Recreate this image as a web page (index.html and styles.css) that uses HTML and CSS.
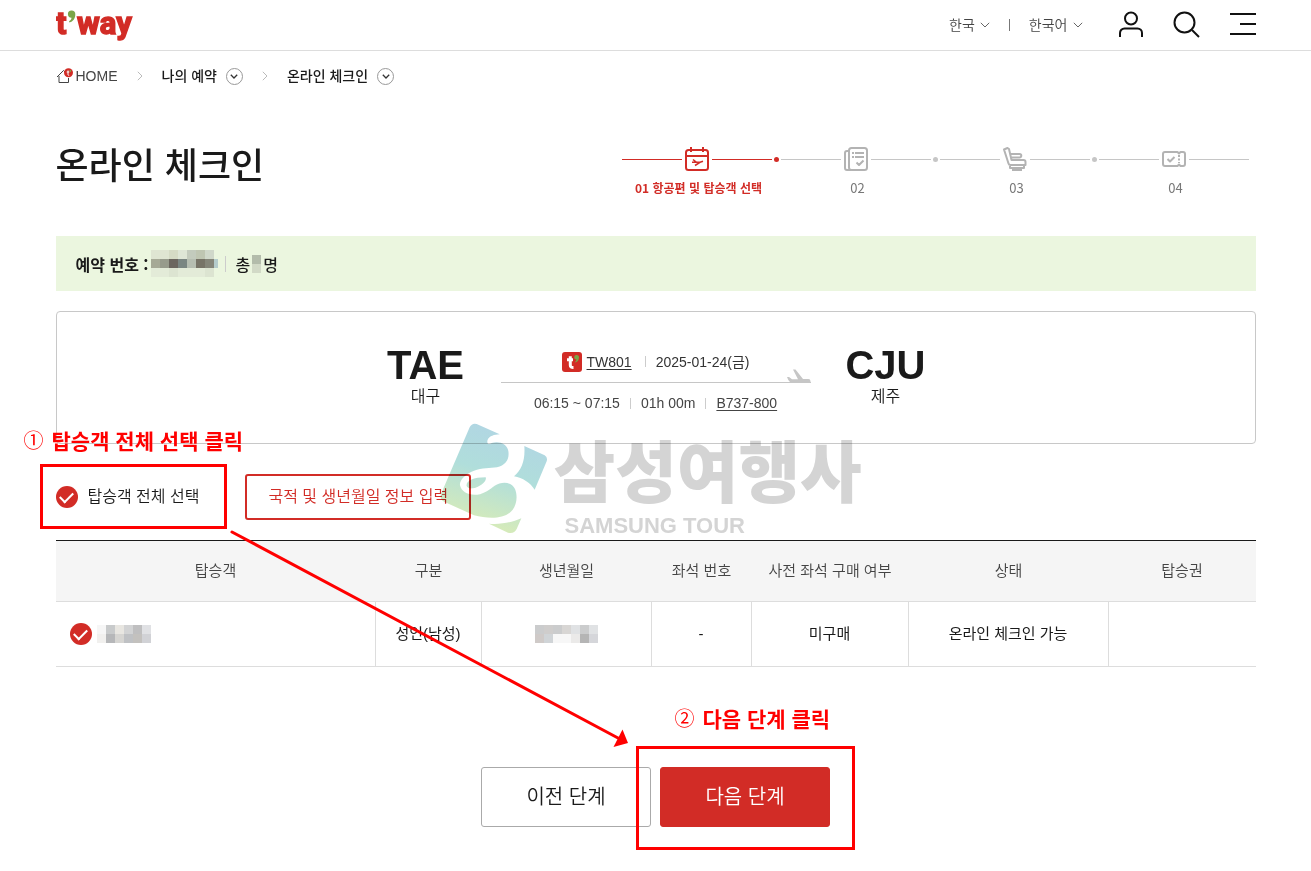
FILE: index.html
```html
<!DOCTYPE html>
<html lang="ko">
<head>
<meta charset="utf-8">
<meta name="viewport" content="width=device-width, initial-scale=1">
<title>온라인 체크인</title>
<link rel="stylesheet" href="styles.css">
</head>
<body>
<header class="site-header">
  <div class="wrap header-row">
    <a class="logo" href="#" aria-label="t'way">
      <svg width="80" height="40" viewBox="0 0 80 40"><g class="logo-text"><text x="0" y="29">t</text><text x="21" y="29">way</text></g><path d="M15.500 5.500a3.600 3.600 0 0 1 3.800 4c0 4-2.300 7-5.800 8l-.5-1.200c1.600-.9 2.500-2.200 2.500-3.600a3.600 3.600 0 0 1 0-7.200z" fill="#7aa648"/></svg>
    </a>
    <div class="locale">
      <button type="button" class="locale-btn">한국 <svg width="10" height="6" viewBox="0 0 10 6"><path d="M.8.8 5 5 9.200.8"/></svg></button>
      <span class="locale-sep"></span>
      <button type="button" class="locale-btn">한국어 <svg width="10" height="6" viewBox="0 0 10 6"><path d="M.8.8 5 5 9.200.8"/></svg></button>
    </div>
    <nav class="tools" aria-label="메뉴">
      <button type="button" aria-label="마이페이지"><svg width="26" height="28" viewBox="0 0 26 28"><circle cx="13" cy="7.500" r="6"/><path d="M2 26v-4a4.500 4.500 0 0 1 4.500-4.500h13A4.500 4.500 0 0 1 24 22v4"/></svg></button>
      <button type="button" aria-label="검색"><svg width="28" height="28" viewBox="0 0 28 28"><circle cx="11.500" cy="11.500" r="10"/><path d="m19 19 7 7"/></svg></button>
      <button type="button" aria-label="전체 메뉴"><svg width="26" height="28" viewBox="0 0 26 28"><path d="M0 3h26M10 13h16M0 23h26"/></svg></button>
    </nav>
  </div>
</header>

<main class="wrap page">
  <nav class="crumbs" aria-label="위치">
    <a class="home" href="#"><svg width="18" height="16" viewBox="0 0 18 16"><path d="M1 9 7.500 2.500l5 5M3 8v6.500h9.500V10" fill="none" stroke="#444"/><circle cx="12.500" cy="4.800" r="4.500" fill="#d22c26"/><path d="M12 2.500v4q0 1 1.200.8M10.700 4h2.600" fill="none" stroke="#fff"/><circle cx="14.300" cy="3" r=".9" fill="#7aa648"/></svg>HOME</a>
    <svg class="crumb-arrow" width="6" height="10" viewBox="0 0 6 10"><path d="m.8.800 4.200 4.200L.8 9.200"/></svg>
    <a href="#">나의 예약</a>
    <button type="button" class="crumb-more" aria-label="나의 예약 메뉴"><svg width="8" height="5" viewBox="0 0 8 5"><path d="M.8.8 4 4 7.200.8"/></svg></button>
    <svg class="crumb-arrow" width="6" height="10" viewBox="0 0 6 10"><path d="m.8.800 4.200 4.200L.8 9.200"/></svg>
    <a href="#">온라인 체크인</a>
    <button type="button" class="crumb-more" aria-label="온라인 체크인 메뉴"><svg width="8" height="5" viewBox="0 0 8 5"><path d="M.8.8 4 4 7.200.8"/></svg></button>
  </nav>

  <section class="title-row">
    <h1>온라인 체크인</h1>
    <ol class="steps">
      <li class="active">
        <div class="track"><svg width="24" height="24" viewBox="0 0 24 24"><rect x="1" y="3" width="22" height="20" rx="2.500"/><path d="M1 9h22M6 0v5M18 0v5"/><path class="thin" d="m8 12.500 3.500 2.800h3.500l3-1M10 18.500l5-3.200M7 15.300h5"/></svg></div>
        <span>01 항공편 및 탑승객 선택</span>
      </li>
      <li>
        <div class="track"><svg width="24" height="24" viewBox="0 0 24 24"><rect x="5" y="1" width="18" height="22" rx="2.500"/><path d="M5 4H3a2 2 0 0 0-2 2v15a2 2 0 0 0 2 2h4M8 6h2M11 6h9M8 10h2M11 10h9M12.500 15.500l2.500 2.500 4.500-4.500"/></svg></div>
        <span>02</span>
      </li>
      <li>
        <div class="track"><svg width="24" height="24" viewBox="0 0 24 24"><path d="M1 2.500 4.500 1 6 2l2.500 11h12a2 2 0 0 1 2 2v3H7.500a2 2 0 0 1-2-1.500zM7 7h9.500a1.800 1.800 0 0 1 0 3.600H8M7 18v3h14v-3M9 23h10"/></svg></div>
        <span>03</span>
      </li>
      <li>
        <div class="track"><svg width="24" height="24" viewBox="0 0 24 24"><path d="M3 5h12.500l1.500 1.500L18.500 5H21a2 2 0 0 1 2 2v10a2 2 0 0 1-2 2h-2.500L17 17.500 15.500 19H3a2 2 0 0 1-2-2V7a2 2 0 0 1 2-2zM5.500 12l2.500 2.500 4.500-4.500"/><path d="M17 8v8" stroke-dasharray="2 1.500"/></svg></div>
        <span>04</span>
      </li>
    </ol>
  </section>

  <section class="booking">
    <strong>예약 번호 :</strong>
    <svg class="masked" width="67" height="27" viewBox="0 0 67 27" shape-rendering="crispEdges" aria-label="가려진 예약 번호"><path fill="#dfe5d2" d="M0 0h18v9H0z"/><path fill="#d5dbc5" d="M18 0h9v9h-9z"/><path fill="#dee6d6" d="M27 0h9v9h-9z"/><path fill="#c3cbbd" d="M36 0h9v9h-9z"/><path fill="#bfc6b2" d="M45 0h9v9h-9z"/><path fill="#d0d8ca" d="M54 0h9v9h-9z"/><path fill="#a6a996" d="M0 9h9v9H0z"/><path fill="#979b8c" d="M9 9h9v9H9z"/><path fill="#6b665f" d="M18 9h9v9h-9z"/><path fill="#7a8682" d="M27 9h9v9h-9z"/><path fill="#b6beb1" d="M36 9h9v9h-9z"/><path fill="#777467" d="M45 9h9v9h-9z"/><path fill="#858679" d="M54 9h9v9h-9z"/><path fill="#b5cccb" d="M63 9h4v9h-4z"/><path fill="#e3ebd8" d="M0 18h63v9H0z"/><path fill="#dce4d1" d="M18 18h9v9h-9zM54 18h9v9h-9z"/></svg>
    <span class="bar"></span>
    <span>총</span>
    <svg class="masked-count" width="9" height="18" viewBox="0 0 9 18" aria-label="가려진 인원"><path fill="#b3bcab" d="M0 0h9v9H0z"/><path fill="#d2dac7" d="M0 9h9v9H0z"/></svg>
    <span>명</span>
  </section>

  <section class="flight">
    <div class="airport"><strong>TAE</strong><span>대구</span></div>
    <div class="route">
      <div class="route-line route-top">
        <svg width="20" height="20" viewBox="0 0 20 20"><rect width="20" height="20" rx="3" fill="#d22c26"/><path d="M8.300 4.200v9q0 2.300 3.200 2.200M5 7.800h6" fill="none" stroke="#fff" stroke-width="3"/><path d="M14.600 3a2.200 2.200 0 0 1 2.400 2.500c0 2.400-1.400 4.300-3.600 5l-.3-.8c.9-.5 1.300-1.200 1.300-2.100A2.300 2.300 0 0 1 14.600 3z" fill="#7aa648"/></svg>
        <a href="#">TW801</a><span class="bar"></span><span>2025-01-24(금)</span>
      </div>
      <svg class="plane" width="26" height="14" viewBox="0 0 26 14"><path d="M2 8h2l3 2.300h6L8 .5h2.500L18 10h5a2.300 2.300 0 0 1 2.500 2.300A1.500 1.500 0 0 1 24 14H8q-4 0-6-6z" fill="#c6c6c6"/></svg>
      <div class="route-line route-bottom"><span>06:15 ~ 07:15</span><span class="bar"></span><span>01h 00m</span><span class="bar"></span><a href="#">B737-800</a></div>
    </div>
    <div class="airport"><strong>CJU</strong><span>제주</span></div>
  </section>

  <div class="select-row">
    <label class="check-all"><input class="check" type="checkbox" checked><span>탑승객 전체 선택</span></label>
    <button type="button" class="info-btn">국적 및 생년월일 정보 입력</button>
  </div>

  <table class="passengers">
    <colgroup><col class="c-name"><col class="c-type"><col class="c-birth"><col class="c-seat"><col class="c-buy"><col class="c-state"><col class="c-pass"></colgroup>
    <thead><tr><th scope="col">탑승객</th><th scope="col">구분</th><th scope="col">생년월일</th><th scope="col">좌석 번호</th><th scope="col">사전 좌석 구매 여부</th><th scope="col">상태</th><th scope="col">탑승권</th></tr></thead>
    <tbody><tr>
      <td><label class="passenger"><input class="check" type="checkbox" checked aria-label="탑승객 선택"><svg width="54" height="18" viewBox="0 0 54 18" shape-rendering="crispEdges"><path fill="#f6f6f6" d="M0 0h9v9H0z"/><path fill="#c8cacb" d="M9 0h9v9H9z"/><path fill="#e8e6e1" d="M18 0h9v9h-9z"/><path fill="#d2d3d4" d="M27 0h9v9h-9z"/><path fill="#bfbfc0" d="M36 0h9v9h-9z"/><path fill="#e0e1e4" d="M45 0h9v9h-9z"/><path fill="#f1f0ee" d="M0 9h9v9H0z"/><path fill="#b6b7b9" d="M9 9h9v9H9z"/><path fill="#d6d5d2" d="M18 9h9v9h-9z"/><path fill="#bfc1c4" d="M27 9h9v9h-9z"/><path fill="#c3c1be" d="M36 9h9v9h-9z"/><path fill="#d1d2d6" d="M45 9h9v9h-9z"/></svg></label></td>
      <td>성인(남성)</td>
      <td><svg class="birth" width="63" height="18" viewBox="0 0 63 18" shape-rendering="crispEdges" aria-label="가려진 생년월일"><path fill="#cbcccd" d="M0 0h9v9H0zM18 0h9v9h-9zM45 0h9v9h-9z"/><path fill="#cfcdcc" d="M9 0h9v9H9z"/><path fill="#d8d6d4" d="M27 0h9v9h-9z"/><path fill="#e0e2e4" d="M36 0h9v9h-9zM54 0h9v9h-9z"/><path fill="#cfcac8" d="M0 9h9v9H0z"/><path fill="#d0d4d7" d="M9 9h9v9H9z"/><path fill="#f7f7f7" d="M18 9h18v9H18z"/><path fill="#ebeae9" d="M36 9h9v9h-9z"/><path fill="#b5b5b5" d="M45 9h9v9h-9z"/><path fill="#d5d6da" d="M54 9h9v9h-9z"/></svg></td>
      <td>-</td><td>미구매</td><td>온라인 체크인 가능</td><td></td>
    </tr></tbody>
  </table>

  <div class="actions">
    <button type="button" class="btn">이전 단계</button>
    <button type="button" class="btn btn-primary">다음 단계</button>
  </div>

  <div class="watermark">
    <svg class="mark" width="110" height="112" viewBox="28 22 330 336">
      <defs><linearGradient id="g" gradientUnits="userSpaceOnUse" x1="230" y1="30" x2="130" y2="350"><stop offset="0" stop-color="#b1d5e4"/><stop offset=".45" stop-color="#b0dedb"/><stop offset="1" stop-color="#dcedb4"/></linearGradient></defs>
      <path fill="url(#g)" d="M117 38q7-14 21-10l69 31c-17 1-30 5-36 16-4 12 3 17 12 10 22-7 46 2 50 24 4 24-8 43-34 49-20 3-45 2-69 10-26 10-44 28-42 44 4 20 26 31 52 28 24-4 35-15 52-27 22-14 51-12 61 10 9 22 5 51-11 67-25 25-72 22-112 12l-88-40q-16-8-11-24zM108 214c-3-14 18-26 57-26 5 10-17 30-40 33-9 1-15-2-17-7zM281 94l61 28q10 6 6 18l-36 85c-13-20-36-36-62-40 23-20 34-47 31-91zM175 327c37 3 69-4 97-16l-14 32q-8 16-26 11z"/>
    </svg>
    <div class="mark-text"><b>삼성여행사</b><span>SAMSUNG TOUR</span></div>
  </div>
  <p class="note note-one"><span>①</span>탑승객 전체 선택 클릭</p>
  <p class="note note-two"><span>②</span>다음 단계 클릭</p>
  <div class="frame frame-one"></div>
  <div class="frame frame-two"></div>
  <svg class="pointer" width="400" height="220" viewBox="0 0 400 220"><path d="M2 2 388 208" stroke="#f00" stroke-width="3" stroke-linecap="round"/><path d="m398 213-14.500 4 9-17.500z" fill="#f00"/></svg>
</main>
</body>
</html>
```

FILE: styles.css
```css
* { box-sizing: border-box; }
body {
  margin: 0;
  background: #fff;
  color: #1a1a1a;
  font-family: "Liberation Sans", "Noto Sans CJK KR", sans-serif;
  font-size: 14px;
  line-height: 20px;
}
a { color: inherit; text-decoration: none; }
button { font: inherit; color: inherit; background: none; border: 0; padding: 0; cursor: pointer; }
svg { display: block; flex: none; }
.wrap { max-width: 1200px; margin: 0 auto; }

.site-header { border-bottom: 1px solid #ddd; }
.header-row { display: flex; align-items: center; height: 50px; }
.logo { margin-right: auto; }
.logo-text { font: bold 31px/36px "Liberation Sans Narrow", "Roboto", sans-serif; fill: #d22c26; stroke: #d22c26; stroke-width: 1.5px; }
.locale { display: flex; align-items: center; gap: 19px; color: #444; font-weight: 350; }
.locale-btn { display: flex; align-items: center; gap: 5px; }
.locale svg { fill: none; stroke: #666; }
.locale-sep { width: 1px; height: 12px; background: #777; }
.tools { display: flex; gap: 29px; margin-left: 35px; }
.tools svg { fill: none; stroke: #111; stroke-width: 2; }

.page { position: relative; }
.crumbs { display: flex; align-items: center; height: 50px; font-weight: 500; }
.home { display: flex; align-items: center; gap: 2px; color: #444; font-weight: 400; }
.crumb-arrow { margin: 0 19px; fill: none; stroke: #bbb; }
.crumb-more { display: grid; place-items: center; width: 17px; height: 17px; margin-left: 9px; border: 1px solid #999; border-radius: 50%; }
.crumb-more svg { fill: none; stroke: #333; stroke-width: 1.3; }

.title-row { display: flex; justify-content: space-between; align-items: flex-start; height: 135px; padding-top: 42px; }
h1 { margin: 0; font-size: 36px; line-height: 48px; font-weight: 500; }
.steps { display: flex; margin: 0; padding: 4px 3px 0 0; list-style: none; color: #777; font-family: "Noto Sans CJK KR", sans-serif; font-size: 13px; text-align: center; }
.steps li { position: relative; width: 159px; }
.steps li:last-child { width: 154px; }
.steps li:not(:last-child)::after { content: ""; position: absolute; right: 2px; top: 10px; width: 5px; height: 5px; border-radius: 50%; background: #c6c6c6; }
.track { display: flex; align-items: center; gap: 3px; width: 150px; }
.track::before, .track::after { content: ""; flex: 1; height: 1px; background: #c6c6c6; }
.track svg { fill: none; stroke: #b3b3b3; stroke-width: 2; stroke-linejoin: round; }
.track .thin { stroke-width: 1.6; }
.steps span { display: block; width: 154px; margin-top: 7px; white-space: nowrap; }
.steps .active { color: #d22c26; font-size: 12px; font-weight: 700; }
.active .track svg { stroke: #d22c26; }
.active .track::before, .active .track::after, .steps li.active::after { background: #d22c26; }

.booking { display: flex; align-items: center; height: 55px; padding: 0 20px; background: #ebf6df; font-family: "Noto Sans CJK KR", sans-serif; font-size: 16px; font-weight: 500; }
.booking strong { font-weight: 700; }
.masked { margin-left: 2px; }
.bar { width: 1px; height: 11px; background: #ccc; }
.booking .bar { height: 16px; margin: 0 10px 0 7px; }
.masked-count { margin: 0 2px; }

.flight { display: flex; justify-content: center; gap: 36px; height: 133px; margin-top: 20px; padding-top: 31px; border: 1px solid #c8c8c8; border-radius: 4px; }
.airport { display: flex; flex-direction: column; align-items: center; width: 78px; font-size: 16px; font-weight: 350; }
.airport strong { font-size: 40px; line-height: 44px; font-weight: 700; }
.route { position: relative; width: 310px; color: #444; }
.route-line { display: flex; align-items: center; justify-content: center; height: 40px; }
.route-top { gap: 5px; padding-bottom: 2px; border-bottom: 1px solid #c6c6c6; color: #333; }
.route-top .bar { margin: 0 5px 0 8px; }
.route-bottom { gap: 10px; }
.route a { text-decoration: underline; text-underline-offset: 2px; }
.plane { position: absolute; right: 0; top: 26px; }

.select-row { display: flex; align-items: center; gap: 46px; height: 46px; margin: 30px 0 20px; font-size: 16px; font-weight: 350; }
.check-all { display: flex; align-items: center; gap: 10px; }
.check { appearance: none; flex: none; display: grid; place-items: center; width: 22px; height: 22px; margin: 0; border-radius: 50%; background: #d22c26; }
.check::before { content: ""; width: 11px; height: 6px; margin-bottom: 3px; border: solid #fff; border-width: 0 0 2px 2px; rotate: -45deg; }
.info-btn { height: 46px; padding: 0 21px; border: 2px solid #d22c26; border-radius: 3px; color: #d22c26; }

.passengers { width: 100%; table-layout: fixed; border-collapse: separate; border-spacing: 0; border-top: 1px solid #1a1a1a; font-size: 15px; text-align: center; }
.passengers th { height: 61px; padding: 0; border-bottom: 1px solid #ddd; background: #f5f5f5; color: #444; font-weight: 350; }
.passengers td { height: 65px; padding: 0; border-bottom: 1px solid #ddd; border-right: 1px solid #ddd; }
.passengers td:last-child { border-right: 0; }
.c-name { width: 320px; }
.c-type { width: 106px; }
.c-birth { width: 170px; }
.c-seat { width: 100px; }
.c-buy { width: 157px; }
.c-state { width: 200px; }
.c-pass { width: 147px; }
.passenger { display: flex; align-items: center; gap: 5px; padding-left: 14px; }
.birth { margin: 0 auto; }

.actions { display: flex; justify-content: center; gap: 9px; padding: 100px 0 44px; }
.btn { width: 170px; height: 60px; border: 1px solid #aaa; border-radius: 3px; background: #fff; font-size: 20px; font-weight: 350; }
.btn-primary { border-color: #d22c26; background: #d22c26; color: #fff; }

.watermark { position: absolute; left: 384px; top: 371px; display: flex; gap: 4px; mix-blend-mode: multiply; pointer-events: none; color: #d4d4d4; }
.mark-text { display: flex; flex-direction: column; padding-top: 10px; font-family: "Noto Sans CJK KR", sans-serif; }
.mark-text b { font-size: 67px; line-height: 72px; font-weight: 900; }
.mark-text span { padding: 10px 0 0 11px; font: bold 22px/24px "Liberation Sans", sans-serif; }
.note { position: absolute; display: flex; align-items: center; gap: 8px; margin: 0; color: #f00; font: bold 21px/24px "Noto Sans CJK KR", sans-serif; white-space: nowrap; }
.note span { font-size: 20px; font-weight: 400; }
.note-one { left: -32px; top: 377px; }
.note-two { left: 619px; top: 655px; }
.frame { position: absolute; border: 3px solid #f00; pointer-events: none; }
.frame-one { left: -16px; top: 413px; width: 187px; height: 65px; }
.frame-two { left: 580px; top: 695px; width: 219px; height: 104px; }
.pointer { position: absolute; left: 174px; top: 479px; pointer-events: none; }
```
